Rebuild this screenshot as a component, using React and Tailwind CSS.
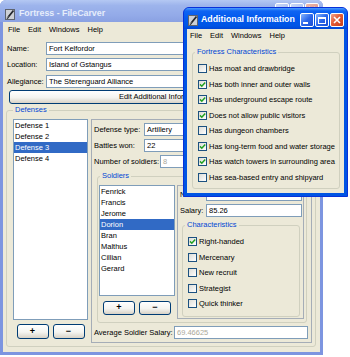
import React from 'react'

const MENU = ['File', 'Edit', 'Windows', 'Help']
const DEFENSES = ['Defense 1', 'Defense 2', 'Defense 3', 'Defense 4']
const SOLDIERS = ['Fenrick', 'Francis', 'Jerome', 'Dorion', 'Bran', 'Malthus', 'Cillian', 'Gerard']

const TRAITS = [
  ['Right-handed', true],
  ['Mercenary', false],
  ['New recruit', false],
  ['Strategist', false],
  ['Quick thinker', false],
]

const FORTRESS = [
  ['Has moat and drawbridge', false],
  ['Has both inner and outer walls', true],
  ['Has underground escape route', true],
  ['Does not allow public visitors', true],
  ['Has dungeon chambers', false],
  ['Has long-term food and water storage', true],
  ['Has watch towers in surrounding area', true],
  ['Has sea-based entry and shipyard', false],
]

const AppIcon = () => (
  <svg width="10" height="11" viewBox="0 0 10 11" className="shrink-0">
    <rect x="0.5" y="0.5" width="9" height="10" fill="#CDD0D6" stroke="#5E6470" />
    <path d="M2 9.5 L8.5 1.5" stroke="#23262C" strokeWidth="1.7" />
    <path d="M1.5 9 L3 7.5" stroke="#F2F2F2" strokeWidth="0.8" />
  </svg>
)

const CapButton = ({ kind, active }) => {
  let bg
  if (kind === 'close') {
    bg = active
      ? 'bg-[linear-gradient(135deg,#F4A58C_0%,#E35B35_45%,#C43E1C_100%)]'
      : 'bg-[linear-gradient(135deg,#EDB9AE_0%,#D98E80_100%)]'
  } else {
    bg = active
      ? 'bg-[linear-gradient(135deg,#86B6FF_0%,#2B67EA_50%,#1A4ED4_100%)]'
      : 'bg-[linear-gradient(135deg,#C9D7F7_0%,#A2B7EE_100%)]'
  }
  return (
    <div className={`w-[14px] h-[14px] rounded-[2px] border border-white flex items-center justify-center ${bg}`}>
      {kind === 'min' && <div className="w-[5px] h-[2px] bg-white mt-[6px] -ml-[3px]" />}
      {kind === 'max' && <div className="w-[8px] h-[7px] border border-white border-t-2" />}
      {kind === 'close' && (
        <svg width="8" height="8" viewBox="0 0 8 8">
          <path d="M1 1 L7 7 M7 1 L1 7" stroke="white" strokeWidth="1.6" />
        </svg>
      )}
    </div>
  )
}

const MenuBar = ({ className = '' }) => (
  <div className={`flex items-center gap-[8px] shrink-0 ${className}`}>
    {MENU.map((m) => (
      <span key={m}>{m}</span>
    ))}
  </div>
)

const Field = ({ value, muted, className = '' }) => (
  <div
    className={`h-[13px] bg-white border border-[#7F9DB9] pl-[2px] leading-[11px] whitespace-nowrap overflow-hidden ${
      muted ? 'text-[#ACA899]' : 'text-black'
    } ${className}`}
  >
    {value}
  </div>
)

const LabeledField = ({ label, labelW, value, muted, className = '' }) => (
  <div className={`flex items-center ${className}`}>
    <span className={`${labelW} shrink-0 whitespace-nowrap`}>{label}</span>
    <Field value={value} muted={muted} className="flex-1" />
  </div>
)

const XPButton = ({ children, className = '' }) => (
  <div
    className={`border border-[#003C74] rounded-[3px] bg-[linear-gradient(180deg,#FFFFFF_0%,#F4F4F0_55%,#D8D2C6_100%)] flex items-center justify-center ${className}`}
  >
    {children}
  </div>
)

const ListBox = ({ items, selected, className = '' }) => (
  <div className={`bg-white border border-[#7F9DB9] ${className}`}>
    {items.map((it) => (
      <div
        key={it}
        className={`h-[11px] leading-[11px] pl-[1px] ${it === selected ? 'bg-[#316AC5] text-white' : ''}`}
      >
        {it}
      </div>
    ))}
  </div>
)

const Check = ({ label, checked }) => (
  <div className="flex items-center gap-[2px] h-[15.5px] whitespace-nowrap">
    <div className="w-[9px] h-[9px] shrink-0 border border-[#1C5180] bg-[linear-gradient(135deg,#DCDCD7_0%,#FFFFFF_100%)] flex items-center justify-center">
      {checked && (
        <svg width="7" height="7" viewBox="0 0 7 7">
          <path d="M1 3.4 L2.8 5.2 L6.2 1.4" stroke="#21A121" strokeWidth="1.5" fill="none" />
        </svg>
      )}
    </div>
    <span>{label}</span>
  </div>
)

const PlusMinus = ({ className = '' }) => (
  <div className={`flex justify-center gap-[4px] ${className}`}>
    <XPButton className="w-[32px] h-full font-bold text-[9px]">+</XPButton>
    <XPButton className="w-[32px] h-full font-bold text-[9px]">−</XPButton>
  </div>
)

const SoldierPanel = () => (
  <div className="w-[127px] h-[134px] shrink-0 border border-[#A5ADB7] flex flex-col">
    <LabeledField label="Name:" labelW="w-[26px]" value="Dorion" className="mt-[2px] pl-[2px] pr-[1px]" />
    <LabeledField label="Salary:" labelW="w-[26px]" value="85.26" className="mt-[3px] pl-[2px] pr-[1px]" />
    <fieldset className="mt-[3px] ml-[4px] mr-[3px] border border-[#D0D0BF] rounded-[3px]">
      <legend className="ml-[2px] px-[2px] leading-[10px] text-[#0046D5]">Characteristics</legend>
      <div className="flex flex-col pl-[5px] pt-[4px] pb-[4px]">
        {TRAITS.map(([t, c]) => (
          <Check key={t} label={t} checked={c} />
        ))}
      </div>
    </fieldset>
  </div>
)

const DefensePanel = () => (
  <div className="w-[221px] h-[224px] shrink-0 border border-[#A5ADB7] flex flex-col">
    <div className="flex flex-col gap-[3px] pt-[3px] pl-[2px] pr-[3px]">
      <LabeledField label="Defense type:" labelW="w-[50px]" value="Artillery" />
      <LabeledField label="Battles won:" labelW="w-[50px]" value="22" />
      <LabeledField label="Number of soldiers:" labelW="w-[66px]" value="8" muted />
    </div>
    <fieldset className="mt-[3px] ml-[5px] mr-[4px] border border-[#D0D0BF] rounded-[3px]">
      <legend className="ml-[2px] px-[2px] leading-[10px] text-[#0046D5]">Soldiers</legend>
      <div className="flex items-start gap-[2px] pl-[1px] pr-[2px] pt-[4px] pb-[3px]">
        <div className="w-[76px] shrink-0 flex flex-col">
          <ListBox items={SOLDIERS} selected="Dorion" className="h-[111px]" />
          <PlusMinus className="mt-[5px] h-[14px]" />
        </div>
        <SoldierPanel />
      </div>
    </fieldset>
    <LabeledField
      label="Average Soldier Salary:"
      labelW="w-[80px]"
      value="69.46625"
      muted
      className="mt-[3px] pl-[2px] pr-[3px]"
    />
  </div>
)

const MainWindow = () => (
  <div className="absolute left-0 top-0 w-[323px] h-[355px] flex flex-col rounded-t-[6px] bg-[#7D95E0]">
    <div className="h-[22px] shrink-0 flex items-start pl-[5px] pr-[4px] rounded-t-[6px] bg-[linear-gradient(180deg,#B4C8F3_0%,#9DB4EC_25%,#93AAE8_70%,#8AA1E2_100%)]">
      <div className="flex items-center h-full pt-[6px]">
        <AppIcon />
        <span className="ml-[4px] text-[8.8px] font-bold text-[#E6EDFB] whitespace-nowrap">Fortress - FileCarver</span>
      </div>
      <div className="ml-auto mt-[3px] flex gap-[1px]">
        <CapButton kind="min" />
        <CapButton kind="max" />
        <CapButton kind="close" />
      </div>
    </div>
    <div className="flex-1 mx-[3px] mb-[3px] bg-[#ECE9D8] flex flex-col">
      <MenuBar className="h-[15px] pl-[5px]" />
      <div className="flex flex-col px-[4px]">
        <LabeledField label="Name:" labelW="w-[39px]" value="Fort Kelfordor" className="mt-[5px]" />
        <LabeledField label="Location:" labelW="w-[39px]" value="Island of Gstangus" className="mt-[3px]" />
        <LabeledField label="Allegiance:" labelW="w-[39px]" value="The Sterenguard Alliance" className="mt-[4px]" />
        <XPButton className="mt-[2px] ml-[2px] h-[14px] whitespace-nowrap">Edit Additional Information</XPButton>
      </div>
      <fieldset className="mt-[1px] ml-[3px] mr-[4px] border border-[#D0D0BF] rounded-[3px]">
        <legend className="ml-[6px] px-[2px] leading-[10px] text-[#0046D5]">Defenses</legend>
        <div className="flex items-start gap-[3px] pl-[6px] pr-[3px] pt-[4px] pb-[3px]">
          <div className="w-[75px] shrink-0 flex flex-col">
            <ListBox items={DEFENSES} selected="Defense 3" className="h-[201px]" />
            <PlusMinus className="mt-[4px] h-[15px]" />
          </div>
          <DefensePanel />
        </div>
      </fieldset>
    </div>
  </div>
)

const InfoDialog = () => (
  <div className="absolute left-[183px] top-[7px] w-[165px] h-[190px] flex flex-col rounded-t-[6px] border border-[#0831D9] bg-[#0054E3]">
    <div className="h-[21px] shrink-0 flex items-center pt-[3px] pl-[4px] pr-[3px] rounded-t-[5px] bg-[linear-gradient(180deg,#4C9DFF_0%,#0F64F2_14%,#0058EE_50%,#0055E5_85%,#0046D5_100%)]">
      <AppIcon />
      <span className="ml-[3px] text-[8.8px] font-bold text-white whitespace-nowrap">Additional Information</span>
      <div className="ml-auto flex gap-[1px]">
        <CapButton kind="min" active />
        <CapButton kind="max" active />
        <CapButton kind="close" active />
      </div>
    </div>
    <div className="flex-1 mx-[3px] mb-[3px] bg-[#ECE9D8] flex flex-col">
      <MenuBar className="h-[14px] pl-[3px]" />
      <fieldset className="mt-[4px] ml-[5px] mr-[4px] h-[142px] border border-[#D0D0BF] rounded-[3px]">
        <legend className="ml-[2px] px-[2px] leading-[10px] text-[#0046D5]">Fortress Characteristics</legend>
        <div className="flex flex-col pl-[5px] pt-[4px]">
          {FORTRESS.map(([t, c]) => (
            <Check key={t} label={t} checked={c} />
          ))}
        </div>
      </fieldset>
    </div>
  </div>
)

export default function App() {
  return (
    <div className="relative w-[350px] h-[357px] overflow-hidden bg-white font-['Liberation_Sans',Arial,sans-serif] text-[7.5px] text-black">
      <MainWindow />
      <InfoDialog />
    </div>
  )
}
